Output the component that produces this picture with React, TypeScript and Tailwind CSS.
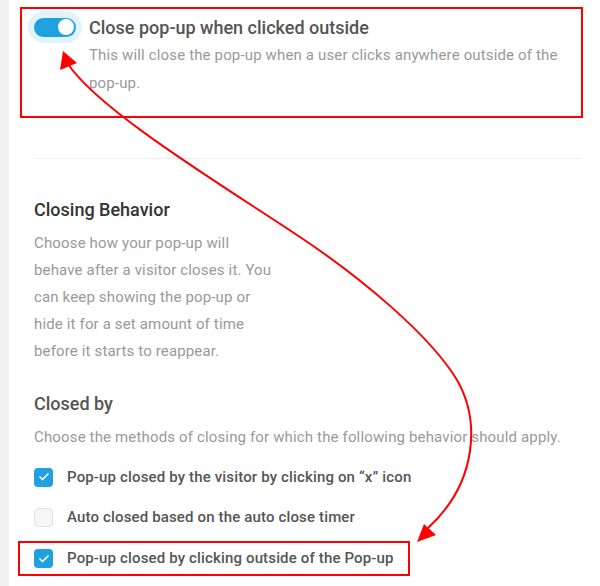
import { Check } from "lucide-react";

function Checkbox({ checked }: { checked: boolean }) {
  return checked ? (
    <span className="w-[19px] h-[19px] rounded-[4px] bg-[#1fa1e0] flex items-center justify-center shrink-0">
      <Check size={12} strokeWidth={3.5} className="text-white" />
    </span>
  ) : (
    <span className="w-[19px] h-[19px] rounded-[4px] bg-[#f6f6f6] border border-[#e2e2e2] shrink-0" />
  );
}

function Arrows() {
  return (
    <svg
      className="absolute inset-0 pointer-events-none"
      width="600"
      height="586"
      viewBox="0 0 600 586"
    >
      <path
        d="M68 64 C100 112 230 190 300 237 C360 277 430 335 457 380 C480 420 478 482 428 528"
        fill="none"
        stroke="#ff0000"
        strokeWidth="2"
      />
      <polygon points="63,51 60,70 77,63" fill="#ff0000" />
      <polygon points="417,542 424,524 436,535" fill="#ff0000" />
    </svg>
  );
}

export default function App() {
  return (
    <div className="relative flex min-h-[586px] bg-white font-['Roboto',sans-serif]">
      <div className="w-[9px] shrink-0 bg-[#f0f0f0]" />
      <div className="flex-1 pl-[11px] pr-[17px] pt-[7px]">
        {/* highlighted toggle row */}
        <div className="flex h-[111px] border-2 border-[#ff0000] pl-[6px] pt-[2px]">
          <div className="w-[54px] h-[32px] shrink-0 rounded-full bg-[#e1f3fc] flex items-center justify-center">
            <div className="w-[42px] h-[19px] rounded-full bg-[#1fa1e0] flex items-center justify-end pr-[2px]">
              <span className="w-[16px] h-[16px] rounded-full bg-white" />
            </div>
          </div>
          <div className="ml-[7px] pt-[5px] pr-4">
            <div className="text-[18px] leading-[24px] font-medium text-[#555]">
              Close pop-up when clicked outside
            </div>
            <p className="mt-[1px] text-[15px] tracking-[0.15px] leading-[28px] text-[#999]">
              This will close the pop-up when a user clicks anywhere outside of the pop-up.
            </p>
          </div>
        </div>

        <div className="ml-[14px] mr-[2px] mt-[40px] border-t border-[#eeeeee]" />

        <div className="pl-[14px]">
          <h3 className="mt-[39px] text-[18px] leading-[24px] font-medium text-[#333]">
            Closing Behavior
          </h3>
          <p className="mt-[8px] w-[245px] text-[15px] tracking-[0.15px] leading-[27px] text-[#999]">
            Choose how your pop-up will behave after a visitor closes it. You can keep showing
            the pop-up or hide it for a set amount of time before it starts to reappear.
          </p>

          <h3 className="mt-[27px] text-[18px] leading-[24px] font-medium text-[#555]">
            Closed by
          </h3>
          <p className="mt-[8px] text-[15px] tracking-[0.15px] leading-[27px] text-[#999]">
            Choose the methods of closing for which the following behavior should apply.
          </p>

          <div className="mt-[9px] flex flex-col gap-[6px]">
            <label className="h-[34px] flex items-center gap-[14px] text-[15px] tracking-[0.15px] font-medium text-[#555]">
              <Checkbox checked />
              Pop-up closed by the visitor by clicking on “x” icon
            </label>
            <label className="h-[34px] flex items-center gap-[14px] text-[15px] tracking-[0.15px] font-medium text-[#555]">
              <Checkbox checked={false} />
              Auto closed based on the auto close timer
            </label>
            <label className="mt-[1px] -ml-[16px] w-[392px] h-[35px] border-2 border-[#ff0000] pl-[14px] flex items-center gap-[14px] text-[15px] tracking-[0.15px] font-medium text-[#555]">
              <Checkbox checked />
              Pop-up closed by clicking outside of the Pop-up
            </label>
          </div>
        </div>
      </div>
      <Arrows />
    </div>
  );
}
